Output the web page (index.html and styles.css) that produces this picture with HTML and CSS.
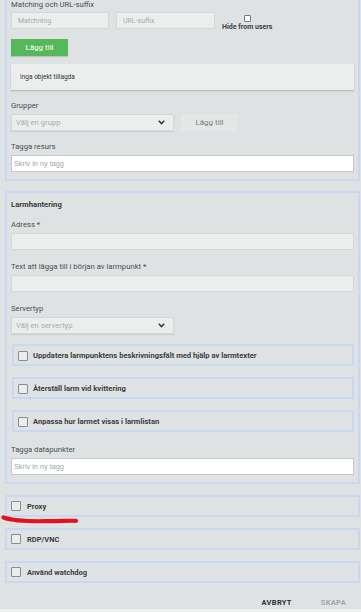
FILE: index.html
```html
<!DOCTYPE html>
<html>
<head>
<meta charset="utf-8">
<link rel="stylesheet" href="styles.css">
</head>
<body>
<div class="page">
  <section class="card card-top">
    <div class="label first">Matching och URL-suffix</div>
    <div class="row match-row">
      <div class="input grey w98"><span class="ph">Matchning</span></div>
      <div class="input grey w99"><span class="ph">URL-suffix</span></div>
      <div class="hide">
        <span class="mini-cb"></span>
        <span class="hide-text">Hide from users</span>
      </div>
    </div>
    <button class="btn-green">Lägg till</button>
    <div class="info">Inga objekt tillagda</div>
    <div class="label mt11">Grupper</div>
    <div class="row group-row">
      <div class="select"><span class="ph sel">Välj en grupp</span><svg class="chev" width="7" height="5" viewBox="0 0 7 5"><path d="M0.8 0.8 L3.5 3.6 L6.2 0.8" fill="none" stroke="#2f3542" stroke-width="1.5"/></svg></div>
      <button class="btn-grey">Lägg till</button>
    </div>
    <div class="label mt11">Tagga resurs</div>
    <div class="input white"><span class="ph tag">Skriv in ny tagg</span></div>
  </section>

  <section class="card card-alarm">
    <div class="title">Larmhantering</div>
    <div class="label mt10">Adress *</div>
    <div class="input grey"></div>
    <div class="label mt12">Text att lägga till i början av larmpunkt *</div>
    <div class="input grey"></div>
    <div class="label mt12">Servertyp</div>
    <div class="select"><span class="ph sel">Välj en servertyp</span><svg class="chev" width="7" height="5" viewBox="0 0 7 5"><path d="M0.8 0.8 L3.5 3.6 L6.2 0.8" fill="none" stroke="#2f3542" stroke-width="1.5"/></svg></div>
    <div class="cb-card mt10"><span class="cb"></span><span class="cb-text">Uppdatera larmpunktens beskrivningsfält med hjälp av larmtexter</span></div>
    <div class="cb-card mt11"><span class="cb"></span><span class="cb-text">Återställ larm vid kvittering</span></div>
    <div class="cb-card mt11"><span class="cb"></span><span class="cb-text">Anpassa hur larmet visas i larmlistan</span></div>
    <div class="label mt13">Tagga datapunkter</div>
    <div class="input white"><span class="ph tag">Skriv in ny tagg</span></div>
  </section>

  <section class="opt-card mt11"><span class="cb"></span><span class="opt-text">Proxy</span></section>
  <section class="opt-card mt11"><span class="cb"></span><span class="opt-text">RDP/VNC</span></section>
  <section class="opt-card mt11"><span class="cb"></span><span class="opt-text">Använd watchdog</span></section>

  <div class="footer">
    <span class="act dark">AVBRYT</span>
    <span class="act light">SKAPA</span>
  </div>
</div>
<svg class="scribble" width="90" height="20" viewBox="0 0 90 20">
  <path d="M3.5 4.5 C 12 7.5, 25 8.5, 45 8.2 S 70 7.6, 76 7.8" fill="none" stroke="#e3121c" stroke-width="4.2" stroke-linecap="round"/>
</svg>
</body>
</html>
```

FILE: styles.css
```css
html, body {
  margin: 0;
  padding: 0;
}
body {
  background: #eef0f0;
  font-family: Roboto, "Liberation Sans", Arial, sans-serif;
  color: #444;
  width: 361px;
  height: 612px;
  overflow: hidden;
  position: relative;
}
.page {
  background: #dfe2e3;
  padding: 0 1px 0 5px;
  height: 609px;
  box-sizing: border-box;
}
.card {
  border: 2px solid #c9d7f3;
  padding: 0 4px 7px 4px;
}
.card-top {
  border-top: none;
}
.card-alarm {
  margin-top: 10px;
  padding-top: 7px;
}
.label {
  font-size: 7.7px;
  line-height: 10px;
  color: #4a4d50;
  height: 10px;
  margin-bottom: 3px;
}
.label.first {
  line-height: 9px;
  height: 9px;
}
.title {
  font-size: 7.7px;
  line-height: 10px;
  font-weight: 700;
  color: #3a3d40;
}
.mt10 { margin-top: 10px; }
.mt11 { margin-top: 11px; }
.mt12 { margin-top: 12px; }
.mt13 { margin-top: 13px; }
.row {
  display: flex;
  align-items: flex-start;
}
.match-row {
  gap: 7px;
  height: 17px;
}
.input {
  height: 17px;
  box-sizing: border-box;
  display: flex;
  align-items: center;
  padding-left: 6px;
}
.input.grey {
  background: #eceeed;
  border: 1px solid #d5d8d8;
}
.input.white {
  background: #ffffff;
  border: 1px solid #c6c8c9;
  padding-left: 2px;
}
.w98 { width: 98px; }
.w99 { width: 99px; }
.ph {
  font-size: 7px;
  color: #a9abad;
}
.ph.sel {
  font-size: 7.7px;
}
.ph.tag {
  font-family: "Liberation Sans", Arial, sans-serif;
  font-size: 7.3px;
  color: #a3a5a7;
}
.hide {
  display: flex;
  flex-direction: column;
  align-items: center;
  padding-top: 3px;
}
.mini-cb {
  width: 5px;
  height: 5px;
  border: 1px solid #777;
  border-radius: 1px;
  background: #fff;
}
.hide-text {
  font-size: 7px;
  font-weight: 700;
  line-height: 8px;
  margin-top: 1px;
  color: #3c3f44;
  white-space: nowrap;
}
.btn-green {
  display: block;
  margin-top: 10px;
  width: 57px;
  height: 17px;
  border: none;
  background: #56b85a;
  color: #fff;
  font-family: inherit;
  font-size: 8px;
  padding: 0;
  box-shadow: 0 1px 1px rgba(0,0,0,0.15);
}
.info {
  margin-top: 8px;
  height: 26px;
  background: #eceeed;
  box-shadow: 0 1px 1.5px rgba(0,0,0,0.22);
  display: flex;
  align-items: center;
  padding-left: 9px;
  font-size: 6.5px;
  color: #2e3035;
}
.group-row {
  gap: 7px;
}
.select {
  width: 163px;
  height: 17px;
  box-sizing: border-box;
  background: #eceeed;
  border: 1px solid #d5d8d8;
  box-shadow: 0 1px 1px rgba(0,0,0,0.08);
  display: flex;
  align-items: center;
  justify-content: space-between;
  padding: 0 8px 0 4px;
}
.chev {
  display: block;
}
.btn-grey {
  width: 57px;
  height: 17px;
  border: none;
  background: #e5e7e7;
  color: #7a7c7e;
  font-family: inherit;
  font-size: 8px;
  padding: 0;
}
.cb-card {
  margin-left: 1px;
  height: 22px;
  box-sizing: border-box;
  border: 2px solid #c9d7f3;
  display: flex;
  align-items: center;
  padding-left: 4px;
  padding-top: 1px;
}
.cb {
  width: 10px;
  height: 10px;
  box-sizing: border-box;
  border: 1.5px solid #8a8c8e;
  border-radius: 1px;
  background: #ebeded;
  flex: none;
}
.cb-text {
  margin-left: 5px;
  font-size: 7.6px;
  font-weight: 700;
  color: #3a3d42;
  white-space: nowrap;
}
.opt-card {
  height: 22px;
  box-sizing: border-box;
  border: 2px solid #c9d7f3;
  display: flex;
  align-items: center;
  padding-left: 4px;
}
.opt-text {
  margin-left: 6px;
  font-size: 7.5px;
  font-weight: 700;
  color: #3a3d42;
}
.footer {
  display: flex;
  justify-content: flex-end;
  align-items: center;
  padding-top: 15px;
  line-height: 10px;
  padding-right: 14px;
  gap: 29px;
}
.act {
  font-size: 7.5px;
  font-weight: 700;
  letter-spacing: 0.3px;
}
.act.dark { color: #2c2f33; }
.act.light { color: #a3a5a7; }
.scribble {
  position: absolute;
  left: 0;
  top: 513px;
}
```
